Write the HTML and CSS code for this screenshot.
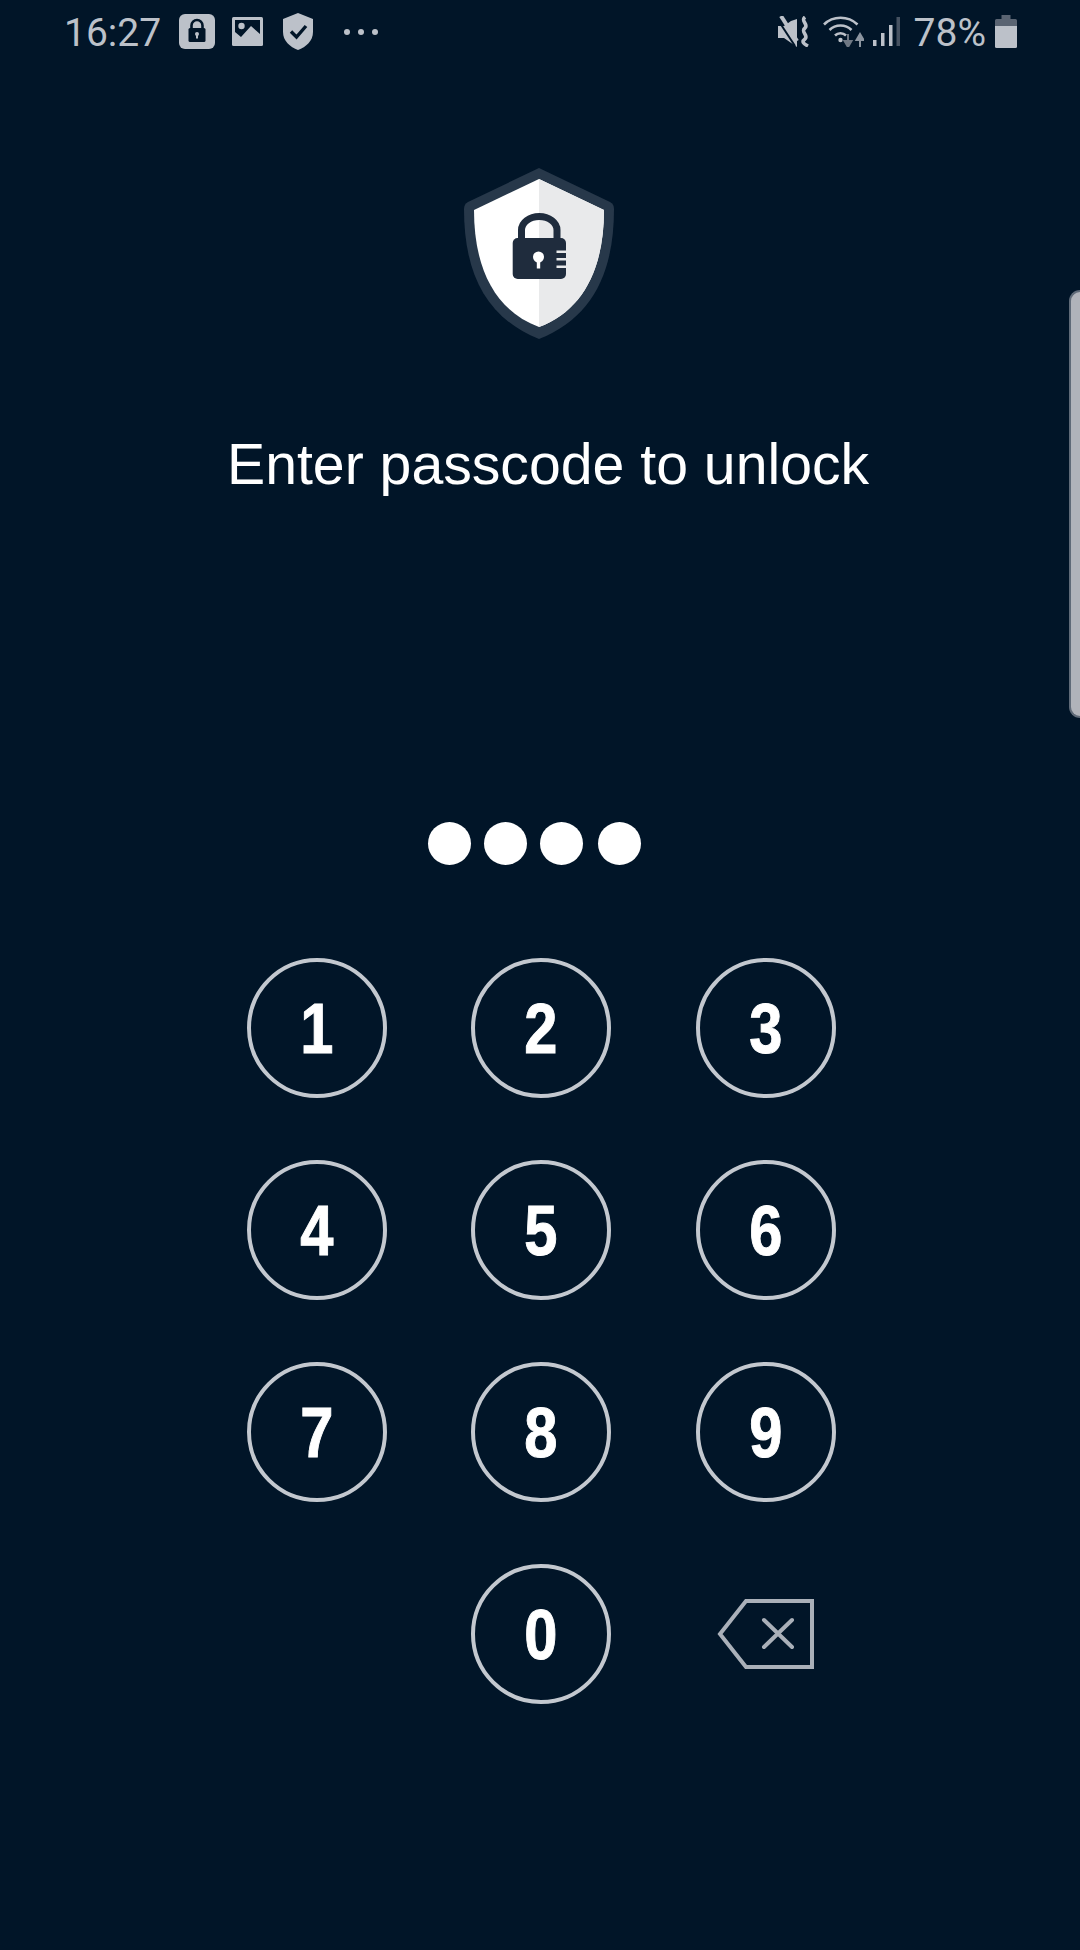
FILE: index.html
```html
<!DOCTYPE html>
<html lang="en">
<head>
    <meta charset="UTF-8" />
    <meta name="viewport" content="width=device-width, initial-scale=1.0">
    <title>Enter passcode</title>
    <link rel="stylesheet" href="styles.css">
</head>
<body>
    <header class="status-bar">
        <span class="status-time">16:27</span>
        <svg class="icon-lock" width="36" height="35" viewBox="0 0 36 35">
            <rect width="36" height="35" rx="6" fill="#bcc1c9"/>
            <path d="M12.5 15V11.5a5.5 5.5 0 0 1 11 0V15" fill="none" stroke="#011528" stroke-width="2.6"/>
            <rect x="9.5" y="14" width="17" height="14" rx="1.5" fill="#011528"/>
            <circle cx="18" cy="20" r="2" fill="#bcc1c9"/>
            <rect x="17" y="20" width="2" height="4.5" fill="#bcc1c9"/>
        </svg>
        <svg class="icon-image" width="31" height="29" viewBox="0 0 31 29">
            <rect width="31" height="29" rx="1.5" fill="#bcc1c9"/>
            <rect x="3" y="3" width="25" height="23" fill="#011528"/>
            <circle cx="9.5" cy="9" r="3.2" fill="#bcc1c9"/>
            <path d="M3 26V15L9 20 19 9 28 17V26Z" fill="#bcc1c9"/>
        </svg>
        <svg class="icon-guard" width="30" height="37" viewBox="0 0 30 37">
            <path d="M15 0L30 6V19C30 28 23 34 15 37 7 34 0 28 0 19V6Z" fill="#bcc1c9"/>
            <path d="M8 18.5L13.5 24 23 13" fill="none" stroke="#011528" stroke-width="3.4"/>
        </svg>
        <span class="status-dots"><i></i><i></i><i></i></span>

        <svg class="icon-mute" width="31" height="31" viewBox="0 0 31 31">
            <path d="M0 10H6L13 5 19 3V31L6 22H0Z" fill="#bcc1c9"/>
            <path d="M3 0L19 25" stroke="#bcc1c9" stroke-width="4"/>
            <path d="M0 4L17 30" stroke="#011528" stroke-width="2"/>
            <path d="M27 1C22 5 31 8 27 12 22 16 31 19 27 23 23 26 26 28 30 30" fill="none" stroke="#bcc1c9" stroke-width="3.6"/>
        </svg>
        <svg class="icon-wifi" width="41" height="31" viewBox="0 0 41 31">
            <path d="M1 8.5C10-.5 25-.5 34.500 8.500M6.500 14C12.500 8 22.500 8 28.500 14M12 19.500C15 16.500 20 16.500 23 19.500" fill="none" stroke="#bcc1c9" stroke-width="2.6"/>
            <circle cx="17.500" cy="24" r="2.200" fill="#bcc1c9"/>
            <path d="M25 18V27M21.500 25L25 31 28.500 25Z" fill="#6f7884" stroke="#6f7884" stroke-width="2"/>
            <path d="M37 31V22M33.500 24L37 18 40.500 24Z" fill="#8c95a0" stroke="#8c95a0" stroke-width="2"/>
        </svg>
        <svg class="icon-signal" width="27" height="29" viewBox="0 0 27 29">
            <rect x="0" y="23" width="3.500" height="6" fill="#bcc1c9"/>
            <rect x="8" y="16" width="3.500" height="13" fill="#bcc1c9"/>
            <rect x="16" y="8" width="3.500" height="21" fill="#bcc1c9"/>
            <rect x="23.500" y="0" width="3.500" height="29" fill="#465261"/>
        </svg>
        <span class="status-battery">78%</span>
        <svg class="icon-battery" width="22" height="33" viewBox="0 0 22 33">
            <path d="M6.500 0H15.500V4H20.500A1.500 1.500 0 0 1 22 5.500V11H0V5.500A1.500 1.500 0 0 1 1.500 4H6.500Z" fill="#5a6472"/>
            <path d="M0 11H22V31.500A1.500 1.500 0 0 1 20.500 33H1.500A1.500 1.500 0 0 1 0 31.500Z" fill="#bcc1c9"/>
        </svg>
    </header>

    <main class="lock-screen">
        <svg class="logo" width="150" height="171" viewBox="0 0 150 171">
            <path d="M75 0L146 34Q150 36 150 41C150 105 128 150 75 171 22 150 0 105 0 41Q0 36 4 34Z" fill="#27384a"/>
            <path d="M75 11L140 42C140 102 118 143 75 159 32 143 10 102 10 42Z" fill="#ffffff"/>
            <path d="M75 11L140 42C140 102 118 143 75 159Z" fill="#e9eaeb"/>
            <path d="M57.500 72V62A17.750 13.500 0 0 1 93 62V72" fill="none" stroke="#1f2c3d" stroke-width="7"/>
            <rect x="48.700" y="70" width="53.300" height="41" rx="5" fill="#1f2c3d"/>
            <circle cx="74.500" cy="89" r="5.500" fill="#ffffff"/>
            <rect x="72.800" y="90" width="3.400" height="10.500" fill="#ffffff"/>
            <rect x="92.500" y="82.500" width="10" height="2.500" fill="#e9eaeb"/>
            <rect x="92.500" y="90" width="10" height="2.500" fill="#e9eaeb"/>
            <rect x="92.500" y="97.500" width="10" height="2.500" fill="#e9eaeb"/>
        </svg>

        <h1 class="prompt">Enter passcode to unlock</h1>

        <div class="pin-dots">
            <span class="pin-dot"></span>
            <span class="pin-dot"></span>
            <span class="pin-dot"></span>
            <span class="pin-dot"></span>
        </div>

        <div class="keypad">
            <button class="key"><span>1</span></button>
            <button class="key"><span>2</span></button>
            <button class="key"><span>3</span></button>
            <button class="key"><span>4</span></button>
            <button class="key"><span>5</span></button>
            <button class="key"><span>6</span></button>
            <button class="key"><span>7</span></button>
            <button class="key"><span>8</span></button>
            <button class="key"><span>9</span></button>
            <button class="key key-zero"><span>0</span></button>
            <button class="key-back">
                <svg width="97" height="70" viewBox="0 0 97 70">
                    <path d="M95 2H29L3 35 29 68H95Z" fill="none" stroke="#aab0b9" stroke-width="4"/>
                    <path d="M47 21L75 48M75 21L47 48" fill="none" stroke="#aab0b9" stroke-width="4" stroke-linecap="round"/>
                </svg>
            </button>
        </div>
    </main>

    <div class="side-handle"></div>
</body>
</html>
```

FILE: styles.css
```css
body {
    margin: 0;
    height: 1950px;
    overflow: hidden;
    background-color: #011528;
    font-family: "Liberation Sans", Arial, sans-serif;
    color: #fff;
}

.status-bar {
    display: flex;
    align-items: center;
    height: 63px;
    padding: 0 63px 0 64px;
    font-family: Roboto, sans-serif;
    font-size: 39px;
    color: #bcc1c9;
    box-sizing: border-box;
}

.status-time {
    margin-right: 18px;
    padding-top: 3px;
}

.icon-image {
    margin-left: 17px;
}

.icon-guard {
    margin-left: 20px;
}

.status-dots {
    display: flex;
    gap: 8px;
    margin-left: 31px;
}

.status-dots i {
    width: 6px;
    height: 6px;
    border-radius: 50%;
    background-color: #bcc1c9;
}

.icon-mute {
    margin-left: auto;
}

.icon-wifi {
    margin-left: 14px;
}

.icon-signal {
    margin-left: 9px;
}

.status-battery {
    margin-left: 14px;
    padding-top: 3px;
}

.icon-battery {
    margin-left: 9px;
}

.lock-screen {
    display: flex;
    flex-direction: column;
}

.logo {
    margin: 105px 0 0 464px;
}

.prompt {
    margin: 85px 0 0 227px;
    font-size: 57.2px;
    font-weight: 400;
    line-height: 80px;
}

.pin-dots {
    display: flex;
    gap: 13px;
    margin: 318px 0 0 428px;
}

.pin-dot {
    width: 43px;
    height: 43px;
    border-radius: 50%;
    background-color: #fff;
}

.pin-dot:last-child {
    margin-left: 2px;
}

.keypad {
    display: grid;
    grid-template-columns: repeat(3, 140px);
    grid-auto-rows: 140px;
    column-gap: 84.5px;
    row-gap: 62px;
    margin: 93px 0 0 246.6px;
}

.key {
    display: flex;
    align-items: center;
    justify-content: center;
    padding: 0;
    border: 4px solid #c3c8cf;
    border-radius: 50%;
    background: none;
    color: #fff;
    font-family: "Liberation Sans", Arial, sans-serif;
    font-size: 71px;
    font-weight: 700;
    -webkit-text-stroke: 1px #fff;
}

.key span {
    display: block;
    transform: scaleX(0.84);
}

.key-zero {
    grid-column: 2;
}

.key-back {
    display: flex;
    align-items: center;
    justify-content: center;
    padding: 0;
    border: none;
    background: none;
}

.side-handle {
    position: absolute;
    top: 290px;
    right: 0;
    width: 11px;
    height: 428px;
    box-sizing: border-box;
    border: 2px solid #5f6a78;
    border-right: none;
    border-radius: 12px 0 0 12px;
    background-color: #b0b3ba;
}
```
